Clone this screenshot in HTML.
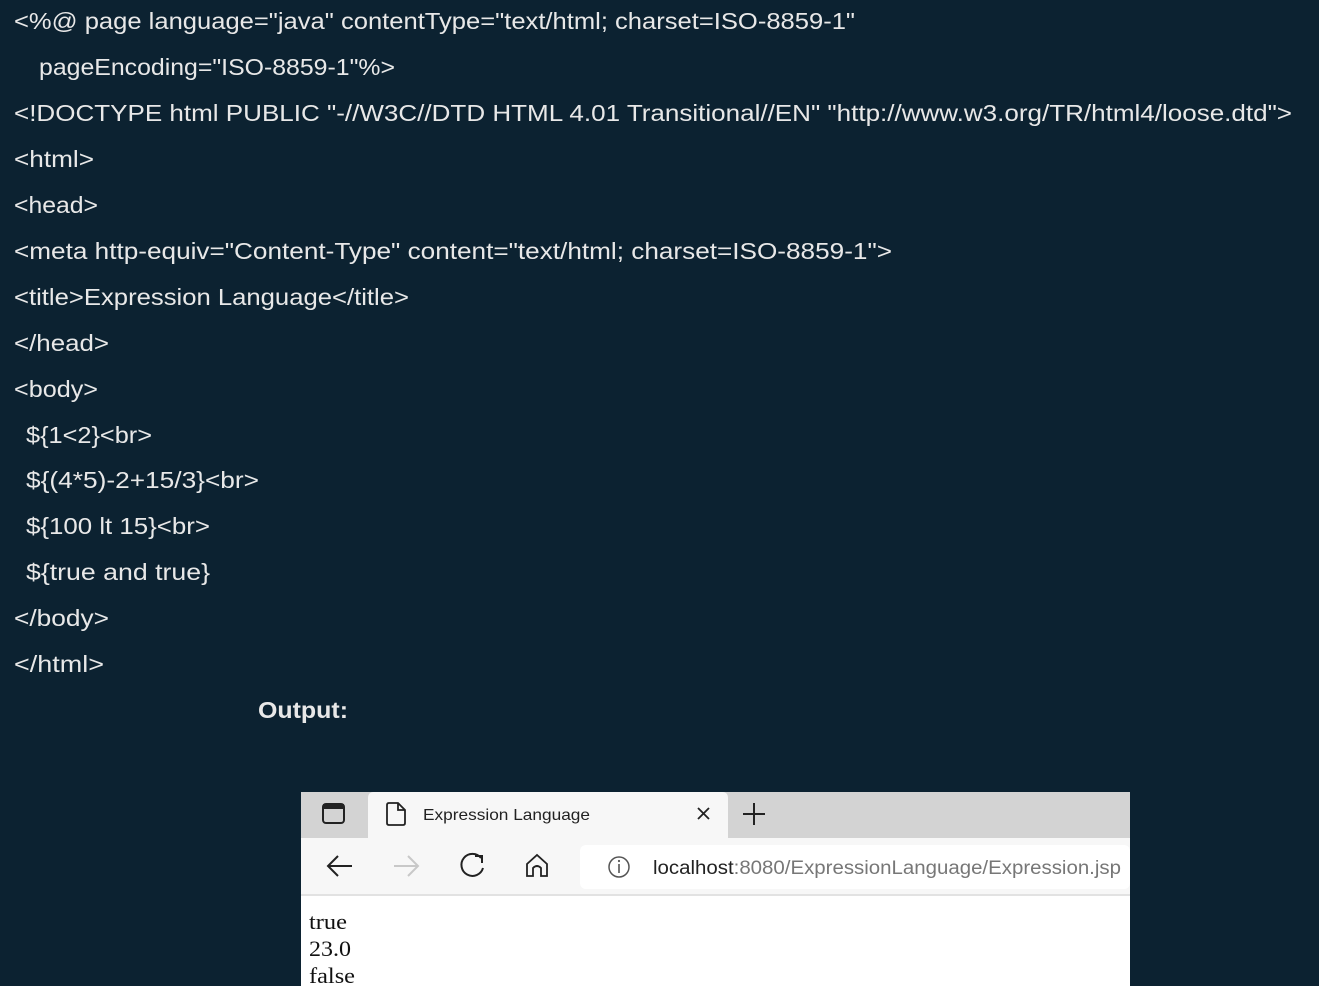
<!DOCTYPE html>
<html><head><meta charset="utf-8"><style>
html,body{margin:0;padding:0;background:#0c2231;width:1319px;height:986px;overflow:hidden}
svg{display:block}
</style></head><body>
<svg width="1319" height="986" xmlns="http://www.w3.org/2000/svg">
<rect width="1319" height="986" fill="#0c2231"/>
<g font-family="Liberation Sans, sans-serif" font-size="23" fill="#e8e8e8">
<text x="14" y="29" textLength="841" lengthAdjust="spacingAndGlyphs">&lt;%@ page language="java" contentType="text/html; charset=ISO-8859-1"</text>
<text x="39" y="75" textLength="356" lengthAdjust="spacingAndGlyphs">pageEncoding="ISO-8859-1"%&gt;</text>
<text x="14" y="121" textLength="1278" lengthAdjust="spacingAndGlyphs">&lt;!DOCTYPE html PUBLIC "-//W3C//DTD HTML 4.01 Transitional//EN" "http://www.w3.org/TR/html4/loose.dtd"&gt;</text>
<text x="14" y="167" textLength="80" lengthAdjust="spacingAndGlyphs">&lt;html&gt;</text>
<text x="14" y="213" textLength="84" lengthAdjust="spacingAndGlyphs">&lt;head&gt;</text>
<text x="14" y="259" textLength="878" lengthAdjust="spacingAndGlyphs">&lt;meta http-equiv="Content-Type" content="text/html; charset=ISO-8859-1"&gt;</text>
<text x="14" y="305" textLength="395" lengthAdjust="spacingAndGlyphs">&lt;title&gt;Expression Language&lt;/title&gt;</text>
<text x="14" y="351" textLength="95" lengthAdjust="spacingAndGlyphs">&lt;/head&gt;</text>
<text x="14" y="397" textLength="84" lengthAdjust="spacingAndGlyphs">&lt;body&gt;</text>
<text x="26" y="443" textLength="126" lengthAdjust="spacingAndGlyphs">${1&lt;2}&lt;br&gt;</text>
<text x="26" y="488" textLength="233" lengthAdjust="spacingAndGlyphs">${(4*5)-2+15/3}&lt;br&gt;</text>
<text x="26" y="534" textLength="184" lengthAdjust="spacingAndGlyphs">${100 lt 15}&lt;br&gt;</text>
<text x="26" y="580" textLength="184" lengthAdjust="spacingAndGlyphs">${true and true}</text>
<text x="14" y="626" textLength="95" lengthAdjust="spacingAndGlyphs">&lt;/body&gt;</text>
<text x="14" y="672" textLength="90" lengthAdjust="spacingAndGlyphs">&lt;/html&gt;</text>
<text x="258" y="718" textLength="90" lengthAdjust="spacingAndGlyphs" font-weight="bold">Output:</text>
</g>
<rect x="301" y="792" width="829" height="194" fill="#ffffff"/>
<rect x="301" y="792" width="829" height="46" fill="#d3d3d3"/>
<path d="M368 838 V798 Q368 792 374 792 H722 Q728 792 728 798 V838 Z" fill="#f7f7f7"/>
<rect x="301" y="838" width="829" height="57" fill="#f7f7f7"/>
<rect x="301" y="894" width="829" height="2" fill="#e2e2e2"/>
<rect x="580" y="845" width="550" height="44" rx="6" fill="#ffffff"/>
<rect x="323" y="804" width="21" height="19" rx="3" fill="none" stroke="#222" stroke-width="2"/>
<rect x="323" y="804" width="21" height="5" fill="#222"/>
<path d="M389 803 H398 L405 810 V823 Q405 825 403 825 H389 Q387 825 387 823 V805 Q387 803 389 803 Z M398 803 V810 H405" fill="none" stroke="#222" stroke-width="1.8"/>
<text x="423" y="820" font-family="Liberation Sans, sans-serif" font-size="16" fill="#222" textLength="167" lengthAdjust="spacingAndGlyphs">Expression Language</text>
<path d="M698 808 L709 819 M709 808 L698 819" stroke="#222" stroke-width="1.8"/>
<path d="M754 803 V825 M743 814 H765" stroke="#222" stroke-width="2"/>
<path d="M352 866 H328 M338 856 L328 866 L338 876" fill="none" stroke="#222" stroke-width="2"/>
<path d="M394 866 H418 M408 856 L418 866 L408 876" fill="none" stroke="#c8c8c8" stroke-width="2"/>
<path d="M481 858 A11 11 0 1 0 483 868" fill="none" stroke="#222" stroke-width="2"/>
<path d="M475 856 H482 V863" fill="none" stroke="#222" stroke-width="2"/>
<path d="M527 876 V864 L537 855 L547 864 V876 H541 V868 Q537 864 533 868 V876 Z" fill="none" stroke="#222" stroke-width="1.8"/>
<circle cx="619" cy="867" r="10" fill="none" stroke="#555" stroke-width="1.5"/>
<path d="M619 864 V873" stroke="#555" stroke-width="1.6"/><circle cx="619" cy="861" r="1.1" fill="#555"/>
<text x="653" y="874" font-family="Liberation Sans, sans-serif" font-size="19" fill="#222" textLength="468" lengthAdjust="spacingAndGlyphs">localhost<tspan fill="#777">:8080/ExpressionLanguage/Expression.jsp</tspan></text>
<g font-family="Liberation Serif, serif" font-size="22" fill="#111">
<text x="309" y="929" textLength="38" lengthAdjust="spacingAndGlyphs">true</text>
<text x="309" y="956" textLength="42" lengthAdjust="spacingAndGlyphs">23.0</text>
<text x="309" y="983" textLength="46" lengthAdjust="spacingAndGlyphs">false</text>
</g>
</svg>
</body></html>
